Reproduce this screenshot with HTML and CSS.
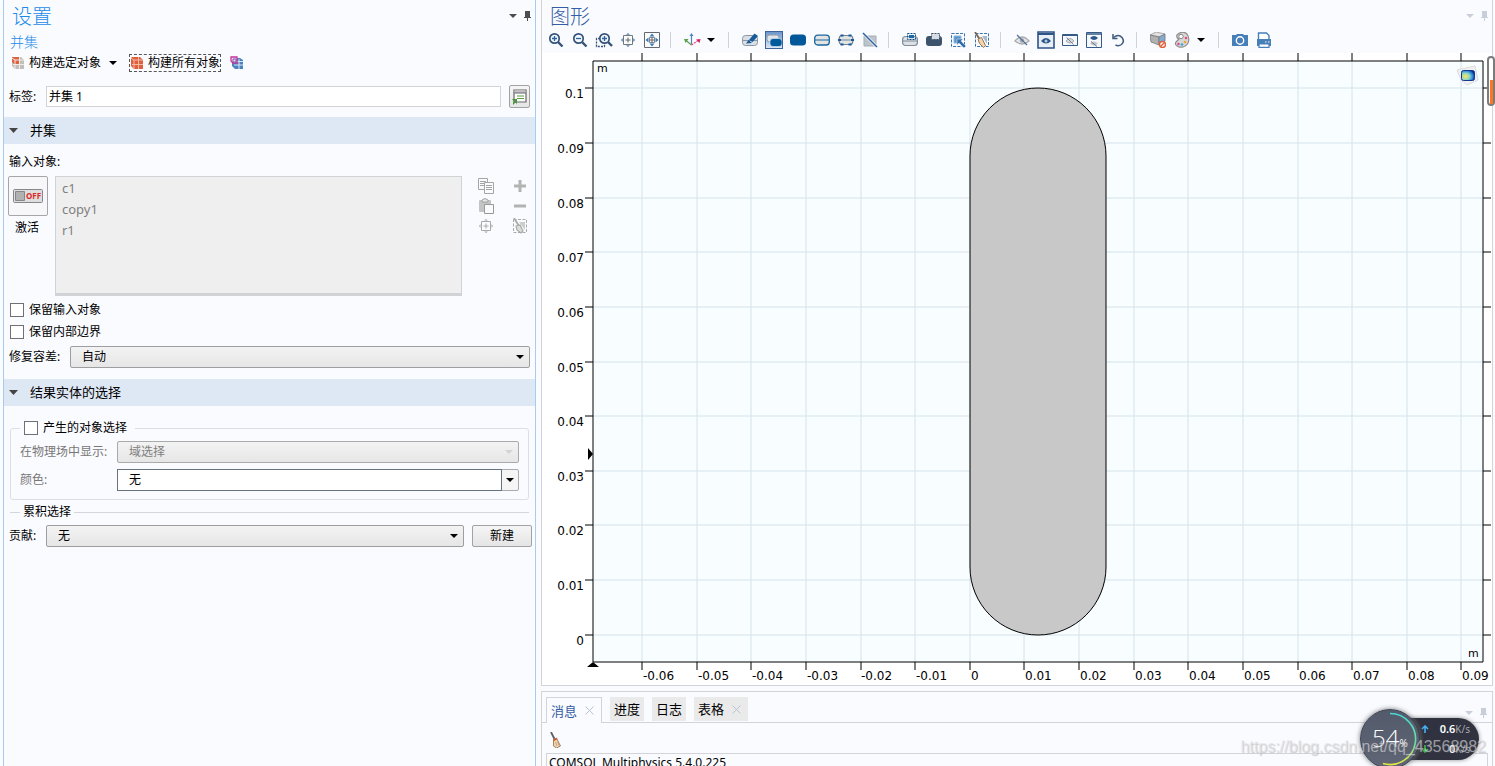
FILE: index.html
```html
<!DOCTYPE html>
<html lang="zh-CN">
<head>
<meta charset="utf-8">
<title>COMSOL Multiphysics</title>
<link rel="stylesheet" href="styles.css">
</head>
<body>
<svg class="defs" aria-hidden="true">
  <symbol id="pin" viewBox="0 0 8 10"><path d="M1 0h5v6H1z M0 6h7v1H0z M3 7h1v3H3z"/></symbol>
  <symbol id="caret" viewBox="0 0 8 4"><path d="M0 0h8L4 4z"/></symbol>
  <symbol id="cross" viewBox="0 0 9 9"><path d="M.5.5l8 8M8.500.5l-8 8" stroke="#b9c4d3" fill="none"/></symbol>
  <symbol id="center" viewBox="0 0 16 16"><path d="M3.500 3.500h9v9h-9z" fill="none" stroke="currentColor"/><path d="M8 5.500v5M5.500 8h5" stroke="currentColor" stroke-width="1.400"/><path d="M8 0l2 2H6zM8 16l2-2H6zM0 8l2-2v4zM16 8l-2-2v4z"/></symbol>
  <symbol id="broom" viewBox="0 0 16 16"><path d="M2 0l3.500 7" stroke="#5c5f63" stroke-width="1.800"/><path d="M4.500 7.500l3-1.500 4 8-4 2-3-2z" fill="#f3d6ae" stroke="#8c6b52" stroke-width=".8"/><path d="M4.500 8.500l3.500-1.800" stroke="#d6532e" stroke-width="1.500"/><path d="M6.500 10l1.500 4M8.500 9.500l1.500 4" stroke="#b58b62" stroke-width=".7"/></symbol>
</svg>

<main class="workspace">
  <section class="panel settings" aria-label="设置">
    <header class="panel-title">
      <h1>设置</h1>
      <span class="window-tools">
        <button type="button" aria-label="菜单"><svg width="8" height="4"><use href="#caret"/></svg></button>
        <button type="button" aria-label="固定"><svg width="8" height="10"><use href="#pin"/></svg></button>
      </span>
    </header>
    <h2 class="subtitle">并集</h2>
    <div class="build-bar">
      <button type="button" class="build">
        <svg width="14" height="14" viewBox="0 0 14 14"><path d="M1 1h9l3 3v9H4l-3-3z" fill="#bfc0bc"/><path d="M1 1h7v7H3L1 6z" fill="#dc6340"/><path d="M1 2l3 2h9M4 4v9M8.500 1v12M2 8.500h11" fill="none" stroke="#f6e9e4"/></svg>
        <span>构建选定对象</span><svg class="drop" width="8" height="4"><use href="#caret"/></svg>
      </button>
      <button type="button" class="build focused">
        <svg width="14" height="14" viewBox="0 0 14 14"><path d="M2 1h8l3 3v9H4l-3-3V2z" fill="#de613e"/><path d="M1 2l3 2h9M4 4v9M8.500 1v12M2 8.500h11" fill="none" stroke="#f5b9a6"/></svg>
        <span>构建所有对象</span>
      </button>
      <button type="button" class="build" aria-label="网格">
        <svg width="14" height="14" viewBox="0 0 14 14"><path d="M2 2h8l3 2v9H5l-3-3z" fill="#4a83bd"/><path d="M4 9h9M9 3v10M5 5.500h8" stroke="#d9e6f4"/><path d="M1 1h6v6H3L1 5z" fill="#f3e4f4" stroke="#c4329c" stroke-width="1.300"/><path d="M3 3h3v3H3z" fill="none" stroke="#7456a5"/></svg>
      </button>
    </div>
    <div class="label-row">
      <label for="name">标签:</label>
      <input id="name" type="text" value="并集 1">
      <button type="button" class="raised" aria-label="转到源">
        <svg width="17" height="17" viewBox="0 0 17 17"><path d="M3 2h12v12H3z" fill="#fff" stroke="#67676b" stroke-width="1.200"/><path d="M3.500 2.500h11v2.500h-11z" fill="#c4c1c5"/><path d="M3 5h12" stroke="#67676b"/><path d="M6 8h7M6 10.500h7" stroke="#56a03e" stroke-width="1.200"/><path d="M1 11h5v5l-1.500-1.500L2 17v-2.500l1-1z" fill="#4c9442"/></svg>
      </button>
    </div>

    <h3 class="section-head"><svg width="9" height="5" viewBox="0 0 9 5"><path d="M0 0h9L4.500 5z"/></svg>并集</h3>
    <div class="section">
      <p class="line" id="inputs-label">输入对象:</p>
      <div class="inputs">
        <div class="activate">
          <button type="button" id="activate" aria-label="激活">
            <svg width="30" height="14" viewBox="0 0 30 14"><rect x=".5" y=".5" width="29" height="13" rx="1" fill="#dededc" stroke="#85878a"/><path d="M2.500 2.500h9v9h-9z" fill="#b1b1b3" stroke="#85878a"/><text x="13" y="10" class="off">OFF</text></svg>
          </button>
          <label for="activate">激活</label>
        </div>
        <ul class="objects" aria-labelledby="inputs-label"><li>c1</li><li>copy1</li><li>r1</li></ul>
        <div class="object-tools">
          <button type="button" aria-label="复制"><svg width="16" height="16" viewBox="0 0 16 16" fill="#fafbff" stroke="#a5a5a5"><path d="M.5.500h9v11h-9z"/><path d="M2 3.500h6M2 5.500h4M2 7.500h4"/><path d="M6.500 4.500h9v11h-9z"/><path d="M8 7.500h6M8 9.500h6M8 11.500h6"/></svg></button>
          <button type="button" aria-label="添加"><svg width="16" height="16" viewBox="0 0 16 16"><path d="M8 2v12M2 8h12" stroke="#b3b3b3" stroke-width="3"/></svg></button>
          <button type="button" aria-label="粘贴"><svg width="16" height="16" viewBox="0 0 16 16"><rect x="1" y="2" width="12" height="12" rx="1" fill="#c4c4c4"/><path d="M4 4V2q3-3 6 0v2z" fill="#e8e8e8" stroke="#a0a0a0"/><path d="M6.500 6.500h9v9h-9z" fill="#fafbff" stroke="#999"/></svg></button>
          <button type="button" aria-label="移除"><svg width="16" height="16" viewBox="0 0 16 16"><path d="M2 8h12" stroke="#b3b3b3" stroke-width="3"/></svg></button>
          <button type="button" aria-label="缩放到选择"><svg class="pale" width="14" height="14" viewBox="0 0 14 14"><path d="M2.500 2.500h9v9h-9z" fill="none" stroke="currentColor"/><path d="M7 4.500v5M4.500 7h5" stroke="currentColor"/><path d="M7 0l2 1.500H5zM7 14l2-1.500H5zM0 7l1.500-2v4zM14 7l-1.500-2v4z"/></svg></button>
          <button type="button" aria-label="清除选择"><svg width="16" height="16" viewBox="0 0 16 16"><path d="M1.500 1.500h13v13h-13z" fill="none" stroke="#aaa" stroke-dasharray="3 1.500"/><path d="M7 4h6v8z" fill="#ccc"/><path d="M2 0l5 8" stroke="#aaa" stroke-width="1.800"/><path d="M4 8l4-1 3 6-2 2-4-3z" fill="#ddd" stroke="#aaa" stroke-width="1.200"/></svg></button>
        </div>
      </div>
      <label class="check"><input type="checkbox">保留输入对象</label>
      <label class="check"><input type="checkbox">保留内部边界</label>
      <div class="field">
        <label for="tolerance">修复容差:</label>
        <span class="select"><select id="tolerance"><option>自动</option></select></span>
      </div>
    </div>

    <h3 class="section-head"><svg width="9" height="5" viewBox="0 0 9 5"><path d="M0 0h9L4.500 5z"/></svg>结果实体的选择</h3>
    <div class="section results">
      <fieldset class="group">
        <legend><label class="check"><input type="checkbox">产生的对象选择</label></legend>
        <div class="group-grid">
          <label for="physics">在物理场中显示:</label>
          <span class="select disabled"><select id="physics" disabled><option>域选择</option></select></span>
          <label for="color">颜色:</label>
          <span class="select combo"><select id="color"><option>无</option></select></span>
        </div>
      </fieldset>
      <fieldset class="cumulative">
        <legend>累积选择</legend>
      </fieldset>
      <div class="field contribute">
        <label for="contribution">贡献:</label>
        <span class="select"><select id="contribution"><option>无</option></select></span>
        <button type="button" class="raised new">新建</button>
      </div>
    </div>
  </section>

  <div class="right">
    <section class="panel graphics" aria-label="图形">
      <header class="panel-title">
        <h1>图形</h1>
        <span class="window-tools muted">
          <button type="button" aria-label="菜单"><svg width="8" height="4"><use href="#caret"/></svg></button>
          <button type="button" aria-label="固定"><svg width="8" height="10"><use href="#pin"/></svg></button>
        </span>
      </header>
      <div class="toolbar" role="toolbar">
        <button type="button" aria-label="放大"><svg width="16" height="16" viewBox="0 0 16 16"><circle cx="6.500" cy="6.500" r="4.700" fill="#f4f7fb" stroke="#35527a" stroke-width="1.700"/><path d="M10 10l4.500 4.500" stroke="#35527a" stroke-width="2.400"/><path d="M4 6.500h5M6.500 4v5" stroke="#2b63a0" stroke-width="1.300"/></svg></button>
        <button type="button" aria-label="缩小"><svg width="16" height="16" viewBox="0 0 16 16"><circle cx="6.500" cy="6.500" r="4.700" fill="#f4f7fb" stroke="#35527a" stroke-width="1.700"/><path d="M10 10l4.500 4.500" stroke="#35527a" stroke-width="2.400"/><path d="M4 6.500h5" stroke="#2b63a0" stroke-width="1.300"/></svg></button>
        <button type="button" aria-label="框选缩放"><svg width="18" height="16" viewBox="0 0 18 16"><path d="M5 6.500H1.500v8h8V11" fill="none" stroke="#35527a" stroke-width="1.300" stroke-dasharray="2 1.200"/><circle cx="9.500" cy="6.500" r="4.700" fill="#f4f7fb" stroke="#35527a" stroke-width="1.700"/><path d="M13 10l4 4" stroke="#35527a" stroke-width="2.400"/><path d="M7 6.500h5M9.500 4v5" stroke="#2b63a0" stroke-width="1.300"/></svg></button>
        <button type="button" aria-label="缩放到选择"><svg width="14" height="14" viewBox="0 0 14 14"><path d="M2.500 2.500h9v9h-9z" fill="none" stroke="#777"/><path d="M7 4.500v5M4.500 7h5" stroke="#666"/><path d="M7 0l2 1.800H5zM7 14l2-1.800H5zM0 7l1.800-2v4zM14 7l-1.800-2v4z" fill="#4a83bd"/></svg></button>
        <button type="button" aria-label="缩放到窗口"><svg width="16" height="16" viewBox="0 0 16 16"><path d="M.5.500h15v15H.5z" fill="none" stroke="#66686c"/><path d="M5.500 5.500h5v5h-5z" fill="none" stroke="#888"/><path d="M8 5.500v5M5.500 8h5" stroke="#666"/><path d="M8 1.500l2.500 3h-5zM8 14.500l2.500-3h-5zM1.500 8l3-2.500v5zM14.500 8l-3-2.500v5z" fill="#3d79b9"/></svg></button>
        <i class="sep"></i>
        <button type="button" aria-label="转到视图"><svg width="18" height="16" viewBox="0 0 18 16"><path d="M8.500 3v9" stroke="#4c84bd" stroke-width="1.200"/><path d="M8.500 1l2 3h-4z" fill="#4c84bd"/><path d="M8.500 13L3 8.500" stroke="#5ba04c" stroke-width="1.200"/><path d="M1 7h4.500L2.500 11z" fill="#5ba04c"/><path d="M8.500 13l6-4" stroke="#e0447b" stroke-width="1.200" stroke-dasharray="2 1"/><path d="M17.500 7l-1 4-3.500-3.500z" fill="#d81e62"/></svg></button>
        <button type="button" class="narrow" aria-label="视图菜单"><svg width="8" height="4"><use href="#caret"/></svg></button>
        <i class="sep"></i>
        <button type="button" aria-label="选择"><svg width="16" height="16" viewBox="0 0 16 16"><rect x=".5" y="3.500" width="15" height="10" rx="3" fill="#d9dfe4" stroke="#8b97a4"/><path d="M0 8.500h16" stroke="#8b97a4"/><path d="M7 8l5.500-6.500L16 4l-5.500 6z" fill="#15599b"/><path d="M4 11.500l2.500-3.500 3.500 3z" fill="#15599b"/></svg></button>
        <button type="button" class="pressed" aria-pressed="true" aria-label="选择对象"><svg width="16" height="16" viewBox="0 0 16 16"><rect x="1" y="3" width="12" height="7" rx="2.500" fill="#dfe5eb" stroke="#8d98a5"/><rect x="4" y="6.500" width="12" height="8" rx="3" fill="#005a9c" stroke="#e5edf5" stroke-width=".6"/></svg></button>
        <button type="button" aria-label="选择域"><svg width="16" height="16" viewBox="0 0 16 16"><rect y="2.500" width="16" height="11" rx="3.500" fill="#00579a"/></svg></button>
        <button type="button" aria-label="选择边界"><svg width="16" height="16" viewBox="0 0 16 16"><rect x=".7" y="3.200" width="14.600" height="9.800" rx="3" fill="#e2e4e4" stroke="#1a659f" stroke-width="1.300"/><path d="M1 8h14" stroke="#1a659f"/></svg></button>
        <button type="button" aria-label="选择点"><svg width="16" height="16" viewBox="0 0 16 16"><rect x="1.200" y="3.500" width="13.600" height="9" rx="3" fill="#e2e4e4" stroke="#708395" stroke-width="1.200"/><path d="M1 8h14" stroke="#708395"/><path d="M2.500 2.500h3v2h-3zM10.500 2.500h3v2h-3zM0 7h3v2H0zM13 7h3v2h-3zM2.500 11.500h3v2h-3zM10.500 11.500h3v2h-3z" fill="#15599b"/></svg></button>
        <button type="button" aria-label="取消选择"><svg width="16" height="16" viewBox="0 0 16 16"><path d="M2 4h12v10H2z" fill="#bcc4cc" stroke="#a4adb6"/><path d="M1 1l14 14" stroke="#f5f7fa" stroke-width="3"/><path d="M1 1l14 14" stroke="#2d629d" stroke-width="1.500"/></svg></button>
        <i class="sep"></i>
        <button type="button" aria-label="框选"><svg width="16" height="16" viewBox="0 0 16 16"><rect x=".6" y="4.500" width="14.800" height="9" rx="3" fill="#dde1e5" stroke="#7f8c99" stroke-width="1.200"/><path d="M1 9h14" stroke="#7f8c99"/><path d="M7 3h5v3H7z" fill="#176aac"/><path d="M5.500 1.500h8v6h-8z" fill="none" stroke="#124f89" stroke-width="1" stroke-dasharray="2 1"/></svg></button>
        <button type="button" aria-label="框选域"><svg width="16" height="16" viewBox="0 0 16 16"><rect y="4" width="16" height="10" rx="3" fill="#3d536c"/><path d="M5.500 1.500h8v6h-8z" fill="#d5dce3" stroke="#3d536c" stroke-dasharray="2 1"/></svg></button>
        <button type="button" aria-label="选择框"><svg width="16" height="16" viewBox="0 0 16 16"><path d="M1.500 1.500h13v13h-13z" fill="none" stroke="#3973b0" stroke-dasharray="3 1.300"/><path d="M4 4h7v7H4z" fill="#5594d0" stroke="#91b7da"/><path d="M7 7h6l-2 2 5 5-2 2-5-5-2 2z" fill="#326da8" stroke="#dce8f5" stroke-width=".6"/></svg></button>
        <button type="button" aria-label="清除选择"><svg width="16" height="16" viewBox="0 0 16 16"><path d="M1.500 1.500h13v13h-13z" fill="none" stroke="#3973b0" stroke-dasharray="3 1.300"/><path d="M8 4h5v8z" fill="#a5bad0"/><path d="M1 0l4.500 7" stroke="#776353" stroke-width="1.800"/><path d="M4 7l3.500-1.500 4 8-2 2-4-4z" fill="#f2d6ae" stroke="#957456"/></svg></button>
        <i class="sep"></i>
        <button type="button" aria-label="隐藏"><svg width="16" height="16" viewBox="0 0 16 16"><path d="M1 9q7-8 14 0-7 6-14 0z" fill="#e5e6e7" stroke="#a9acaf" stroke-width="1.300"/><circle cx="8" cy="8.500" r="2.200" fill="#a5a9ad"/><path d="M3 3l10 10" stroke="#51719a" stroke-width="1.200"/></svg></button>
        <button type="button" aria-pressed="true" aria-label="显示"><svg width="18" height="18" viewBox="0 0 18 18"><path d="M1 1h16v16H1z" fill="#e8eef6" stroke="#2d5488" stroke-width="1.600"/><path d="M1 3h16" stroke="#2d5488" stroke-width="2"/><path d="M4 10q5-6 10 0-5 5-10 0z" fill="#27568b"/><circle cx="9" cy="10" r="1.500" fill="#b8c9db"/></svg></button>
        <button type="button" aria-label="隐藏实体"><svg width="16" height="16" viewBox="0 0 16 16"><path d="M.5 2.500h15v11H.5z" fill="#f5f7fa" stroke="#345a87"/><path d="M1 3.500h14" stroke="#345a87"/><path d="M4 9q4-5 8 0-4 4-8 0z" fill="#dadddf" stroke="#aaa"/><path d="M4.500 5.500l7 7" stroke="#7184a0"/></svg></button>
        <button type="button" aria-label="仅显示隐藏"><svg width="16" height="16" viewBox="0 0 16 16"><path d="M.5.500h15v15H.5z" fill="#f5f7fa" stroke="#345a87"/><path d="M1 2h14" stroke="#345a87" stroke-width="1.500"/><path d="M4 6q4-4 8 0-4 4-8 0z" fill="#27568b"/><path d="M4 11.500q4-4 8 0-4 4-8 0z" fill="#c3c7ca"/><path d="M5 9.500l6 5" stroke="#61778e"/></svg></button>
        <button type="button" aria-label="重置"><svg width="16" height="16" viewBox="0 0 16 16"><path d="M3.500 5.500q5-4 8.500 0 3 4-.5 7-3 2-6 .5" fill="none" stroke="#3e5a7f" stroke-width="1.500"/><path d="M3 2v4.500h4.500" fill="none" stroke="#3e5a7f" stroke-width="1.500"/></svg></button>
        <i class="sep"></i>
        <button type="button" aria-label="透明"><svg width="16" height="16" viewBox="0 0 16 16"><path d="M0 3l6-3 9 2-5 3z" fill="#e2e2e2" stroke="#999" stroke-width=".8"/><path d="M0 3l9 2v8l-8-3z" fill="#b1b1b1" stroke="#777" stroke-width=".8"/><path d="M9 5l6-3v7l-6 4z" fill="#83aad1" stroke="#777" stroke-width=".8"/><circle cx="12.500" cy="12.500" r="3" fill="#fff" stroke="#e05e3a" stroke-width="1.400"/><path d="M10.500 14.500l4-4" stroke="#e05e3a" stroke-width="1.300"/></svg></button>
        <button type="button" aria-label="颜色"><svg width="16" height="16" viewBox="0 0 16 16"><path d="M3 3q5-5 10-1 3 4 1 9-3 5-9 4-5-2-3-5l3-3q-3-1-2-4z" fill="#d8d7d5" stroke="#8d8d8d" stroke-width="1.200"/><circle cx="7" cy="4.500" r="2.200" fill="#fff" stroke="#888"/><circle cx="12" cy="6" r="1.300" fill="#e84a80"/><circle cx="11" cy="10" r="1.300" fill="#f1a13a"/><circle cx="8" cy="12.500" r="1.300" fill="#37a6d5"/><circle cx="4.500" cy="12" r="1.300" fill="#e04e91"/></svg></button>
        <button type="button" class="narrow" aria-label="颜色菜单"><svg width="8" height="4"><use href="#caret"/></svg></button>
        <i class="sep"></i>
        <button type="button" aria-label="快照"><svg width="16" height="16" viewBox="0 0 16 16"><path d="M0 3h4l1-1h6l1 1h4v11H0z" fill="#477fb8"/><circle cx="8" cy="8.500" r="3.700" fill="#477fb8" stroke="#fff" stroke-width="1.400"/></svg></button>
        <button type="button" aria-label="打印"><svg width="16" height="16" viewBox="0 0 16 16"><path d="M2.500 7V1h8l2.500 2.500V7" fill="#fff" stroke="#477fb8" stroke-width="1.400"/><path d="M1 7h14v7H1z" fill="#477fb8"/><path d="M3 12h10v3.300H3z" fill="#fff" stroke="#477fb8" stroke-width="1.200"/><path d="M9 10h1.500M12 10h1.500" stroke="#fff"/></svg></button>
      </div>
      <svg class="plot" viewBox="542 53 950 632" role="img" aria-label="几何图形">
        <defs>
          <radialGradient id="logo" cx=".3" cy=".6" r=".75"><stop offset="0" stop-color="#fde95a"/><stop offset=".45" stop-color="#8fd6c4"/><stop offset=".75" stop-color="#2a86d8"/><stop offset="1" stop-color="#06258c"/></radialGradient>
        </defs>
        <path d="M593 61h890v601H593z" fill="#f8fdff"/>
        <path class="grid" d="M642 61v601M697 61v601M751 61v601M806 61v601M861 61v601M915 61v601M970 61v601M1024 61v601M1079 61v601M1134 61v601M1188 61v601M1243 61v601M1298 61v601M1352 61v601M1407 61v601M1461 61v601M593 88h890M593 143h890M593 198h890M593 252h890M593 307h890M593 362h890M593 416h890M593 471h890M593 525h890M593 580h890M593 635h890"/>
        <path class="axis" d="M593 61h890v601H593zM642 53v8m0 601v8M697 53v8m0 601v8M751 53v8m0 601v8M806 53v8m0 601v8M861 53v8m0 601v8M915 53v8m0 601v8M970 53v8m0 601v8M1024 53v8m0 601v8M1079 53v8m0 601v8M1134 53v8m0 601v8M1188 53v8m0 601v8M1243 53v8m0 601v8M1298 53v8m0 601v8M1352 53v8m0 601v8M1407 53v8m0 601v8M1461 53v8m0 601v8M585 88h8m890 0h8M585 143h8m890 0h8M585 198h8m890 0h8M585 252h8m890 0h8M585 307h8m890 0h8M585 362h8m890 0h8M585 416h8m890 0h8M585 471h8m890 0h8M585 525h8m890 0h8M585 580h8m890 0h8M585 635h8m890 0h8"/>
        <rect class="shape" x="970" y="88" width="136" height="547" rx="68"/>
        <path d="M588 448l5 6-5 6zM587 667l6-5 6 5z"/>
        <g class="ticks">
          <text x="643" y="680">-0.06</text><text x="698" y="680">-0.05</text><text x="752" y="680">-0.04</text><text x="807" y="680">-0.03</text><text x="861" y="680">-0.02</text><text x="916" y="680">-0.01</text><text x="971" y="680">0</text><text x="1025" y="680">0.01</text><text x="1080" y="680">0.02</text><text x="1135" y="680">0.03</text><text x="1189" y="680">0.04</text><text x="1244" y="680">0.05</text><text x="1299" y="680">0.06</text><text x="1353" y="680">0.07</text><text x="1408" y="680">0.08</text><text x="1462" y="680">0.09</text>
          <text class="unit" x="597" y="72">m</text><text class="unit" x="1468" y="657">m</text>
        </g>
        <g class="ticks end">
          <text x="584" y="98">0.1</text><text x="584" y="153">0.09</text><text x="584" y="208">0.08</text><text x="584" y="262">0.07</text><text x="584" y="317">0.06</text><text x="584" y="372">0.05</text><text x="584" y="426">0.04</text><text x="584" y="481">0.03</text><text x="584" y="535">0.02</text><text x="584" y="590">0.01</text><text x="584" y="645">0</text>
        </g>
        <path d="M1457 70l18-4 3 14-11 5-6-5z" fill="#f1f1f1" stroke="#dcdcdc"/>
        <rect x="1461.500" y="70.500" width="13" height="10" rx="2" fill="url(#logo)" stroke="#16398f"/>
      </svg>
    </section>

    <section class="panel messages" aria-label="消息">
      <div class="tabs" role="tablist">
        <button type="button" role="tab" aria-selected="true" class="tab active">消息<svg width="9" height="9"><use href="#cross"/></svg></button>
        <button type="button" role="tab" class="tab">进度</button>
        <button type="button" role="tab" class="tab">日志</button>
        <button type="button" role="tab" class="tab">表格<svg width="9" height="9"><use href="#cross"/></svg></button>
        <span class="window-tools muted">
          <button type="button" aria-label="菜单"><svg width="8" height="4"><use href="#caret"/></svg></button>
          <button type="button" aria-label="固定"><svg width="8" height="10"><use href="#pin"/></svg></button>
        </span>
      </div>
      <button type="button" class="clear" aria-label="清除"><svg width="16" height="16"><use href="#broom"/></svg></button>
      <div class="log">COMSOL Multiphysics 5.4.0.225</div>
    </section>
  </div>
</main>

<div class="scroll-mark"><i></i></div>
<aside class="meter" aria-label="网速">
  <div class="rates">
    <p><svg width="8" height="8" viewBox="0 0 8 8"><path d="M4 8V2M1 4l3-3 3 3" stroke="#45b0f3" stroke-width="1.600" fill="none"/></svg><b>0.6</b><small>K/s</small></p>
    <p><svg width="8" height="8" viewBox="0 0 8 8"><path d="M4 0v6M1 4l3 3 3-3" stroke="#3ac04b" stroke-width="1.600" fill="none"/></svg><b>0</b><small>K/s</small></p>
  </div>
  <div class="dial">
    <svg width="60" height="60" viewBox="0 0 60 60"><defs><linearGradient id="arc" x2="0" y2="1"><stop offset="0" stop-color="#46d9d4"/><stop offset=".6" stop-color="#70df9a"/><stop offset="1" stop-color="#e6e640"/></linearGradient></defs><path d="M30 4.500a25.500 25.500 0 1 1-7 50" fill="none" stroke="url(#arc)" stroke-width="1.600"/></svg>
    <span>54<small>%</small></span>
  </div>
</aside>
<p class="credit">https://blog.csdn.net/qq_43568982</p>
</body>
</html>
```
FILE: styles.css
```css
* { box-sizing: border-box; }
body {
  margin: 0;
  height: 100vh;
  overflow: hidden;
  position: relative;
  background: #fafbff;
  color: #000;
  font: 12px/18px "Noto Sans", "Noto Sans CJK SC", sans-serif;
}
h1, h2, h3, p, ul, fieldset { margin: 0; padding: 0; font-weight: 400; }
button, input, select { font: inherit; color: inherit; margin: 0; }
button { display: flex; align-items: center; justify-content: center; padding: 0; border: 0; background: none; flex: none; }
svg { flex: none; display: block; }
.defs { position: absolute; width: 0; height: 0; }

.workspace {
  display: grid;
  grid-template-columns: minmax(0, 533fr) minmax(0, 952fr);
  gap: 5px;
  height: 100%;
  padding: 0 2px 0 3px;
}
.right { display: flex; flex-direction: column; gap: 5px; min-height: 0; }
.settings { border: solid #a6cdf0; border-width: 0 1px; }
.graphics { border: 1px solid #d3d4da; border-top: 0; }

.panel-title { display: flex; justify-content: space-between; height: 30px; padding: 2px 3px 0 8px; }
.panel-title h1 { font-size: 20px; line-height: 28px; font-weight: 300; color: #1c8be8; font-family: "Noto Sans CJK SC", sans-serif; }
.graphics h1 { color: #345da6; }
.window-tools { display: flex; align-items: center; gap: 7px; fill: #4c4d52; }
.window-tools.muted { fill: #c9cfda; }

.subtitle { margin: 2px 0 0 6px; font-size: 14px; line-height: 20px; font-weight: 300; color: #1c8be8; }
.build-bar { display: flex; align-items: center; height: 22px; padding-left: 6px; gap: 8px; }
.build { height: 18px; gap: 4px; padding: 0 1px; }
.build .drop { margin: 0 3px 0 4px; }
.build.focused { outline: 1px dashed #555; outline-offset: -1px; }

.label-row { display: flex; align-items: center; margin-top: 11px; padding: 0 5px; height: 23px; }
.label-row label { width: 37px; }
.label-row input { flex: 1; min-width: 0; height: 21px; margin-right: 8px; padding: 0 2px 2px; border: 1px solid #d2d3d6; background: #fff; }
.raised { border: 1px solid #a2a2a5; border-radius: 2px; background: linear-gradient(#f5f5f6, #e5e5e6); }
.label-row .raised { width: 21px; height: 23px; }

.section-head { display: flex; align-items: center; gap: 12px; height: 27px; margin-top: 9px; padding: 0 0 1px 5px; font-size: 13px; background: #dee8f4; fill: #444; }
.section + .section-head { margin-top: 11px; }
.section { padding: 9px 5px 0 5px; }
.inputs { display: flex; margin-top: 5px; padding-right: 2px; }
.activate { width: 50px; margin-left: -1px; flex: none; }
.activate button { width: 40px; height: 40px; border: 1px solid #a6a6aa; border-radius: 2px; background: #f7f7fa; }
.activate label { display: block; width: 38px; margin-top: 3px; text-align: center; }
.off { font: 700 8px "Noto Sans", sans-serif; fill: #dd2929; }
.objects { flex: 1; height: 120px; padding: 1px 6px; margin-left: -3px; list-style: none; font-size: 13px; line-height: 21px; color: #808080; background: #efefef; border: 1px solid #d1d2d5; border-bottom-width: 3px; }
.object-tools { display: grid; grid-template-columns: 16px 16px; column-gap: 18px; grid-auto-rows: 20px; align-content: start; margin-left: 16px; }
.pale { color: #aaa; fill: #aaa; }
.check { display: flex; align-items: center; gap: 5px; height: 22px; padding-left: 1px; }
.inputs + .check { margin-top: 3px; }
.check input { appearance: none; width: 14px; height: 14px; border: 1px solid #6f7073; background: #fff; }

.field { display: flex; align-items: center; height: 22px; margin-top: 3px; }
.field label { width: 61px; flex: none; }
.select { position: relative; display: flex; flex: 1; min-width: 0; }
.select select { appearance: none; width: 100%; height: 22px; padding: 0 11px; border: 1px solid #9d9ea1; border-radius: 2px; background: linear-gradient(#f3f3f3, #e6e6e7); }
.select::after { content: ""; position: absolute; right: 6px; top: 9px; border: solid transparent; border-width: 4px 4px 0; border-top-color: #000; pointer-events: none; }
.select.disabled select { color: #808080; opacity: 1; border-color: #aaa; }
.select.disabled::after { border-top-color: #d2d3d5; }
.select.combo { border: 1px solid #a9abaf; border-radius: 2px; padding-right: 16px; background: #f5f5f6; }
.select.combo select { height: 22px; margin: -1px 0 -1px -1px; border-color: #66737f; border-radius: 0; background: #fff; width: calc(100% + 1px); }
.select.combo::after { right: 4px; top: 8px; }

.results { padding: 12px 3px 0 5px; }
.group { margin: 0 3px 0 1px; padding: 3px 9px 8px; min-width: 0; border: 1px solid #dadfe6; border-radius: 3px; }
.group legend { padding: 0 8px 0 3px; }
.group .check { height: 20px; }
.group-grid { display: grid; grid-template-columns: 97px minmax(0, 1fr); row-gap: 6px; align-items: center; color: #777; }
.group-grid .combo { color: #000; }
.cumulative { margin: 3px 3px 0 1px; padding: 0; border: 0 solid #d3d7dd; border-top-width: 1px; min-width: 0; }
.cumulative legend { margin-left: 10px; padding: 0 3px; }
.field.contribute { margin-top: 4px; }
.field.contribute label { width: 37px; }
.new { width: 60px; height: 22px; margin-left: 8px; }

.toolbar { display: flex; align-items: center; height: 23px; padding: 0 0 3px 2px; overflow: hidden; }
.toolbar button { width: 24px; height: 20px; }
.toolbar .narrow { width: 18px; justify-content: flex-start; padding-left: 3px; }
.toolbar .pressed svg { width: 18px; height: 18px; background: linear-gradient(#6d96cb, #dbe8f6); border: 1px solid #3d659b; }
.sep { flex: none; width: 1px; height: 16px; margin: 0 9px 0 6px; background: #d0d2d7; }
.plot { width: 100%; background: #fff; }
.grid { fill: none; stroke: #d4e3ea; }
.axis { fill: none; stroke: #000; }
.shape { fill: #c8c8c8; stroke: #000; }
.ticks { font: 12px "DejaVu Sans", sans-serif; }
.unit { font-size: 11px; }
.end { text-anchor: end; }

.messages { flex: 1; min-height: 0; overflow: hidden; border: 1px solid #d3d4da; border-bottom: 0; }
.tabs { display: flex; align-items: flex-start; gap: 8px; height: 31px; padding: 5px 4px 0 4px; border-bottom: 1px solid #d3d4da; }
.tab { height: 24px; padding: 0 4px; gap: 8px; font-size: 13px; background: #eaeaea; }
.tab:nth-child(4) { padding-right: 7px; }
.tab.active { height: 26px; padding: 0 7px 0 4px; color: #345da6; background: #fafbff; border: 1px solid #d3d4da; border-bottom: 0; }
.tabs .window-tools { margin-left: auto; height: 32px; }
.clear { margin: 9px 0 0 7px; }
.log { height: 60px; margin: 5px 4px 0 4px; padding: 0 2px; border: 1px solid #d3d4da; font-size: 12px; }

.scroll-mark { position: absolute; right: 0; top: 56px; width: 8px; height: 50px; border: 2px solid #7c7c7c; border-radius: 4px; background: #fff; display: flex; align-items: flex-end; justify-content: center; }
.scroll-mark i { width: 3px; height: 24px; background: #ff7521; }
.meter { position: absolute; right: 16px; bottom: -3px; width: 119px; height: 60px; display: flex; align-items: center; color: #fff; }
.rates { width: 80px; height: 42px; margin-left: auto; padding: 1px 9px 0 22px; border-radius: 0 21px 21px 0; background: #30333f; box-shadow: 0 0 4px #888; }
.rates p { display: flex; align-items: center; height: 20px; }
.rates b { margin-left: auto; font-size: 11px; font-weight: 600; }
.rates small { font-size: 10px; color: #a5a8b0; }
.dial { position: absolute; left: 0; top: 0; width: 60px; height: 60px; border-radius: 50%; background: linear-gradient(#535a6b, #606675); border: 1px solid #3e4352; box-shadow: 0 0 5px #777; }
.dial svg { position: absolute; left: -1px; top: -1px; }
.dial span { position: absolute; left: 11px; top: 10px; font: 300 24px/36px "Open Sans", sans-serif; white-space: nowrap; }
.dial small { font-size: 10px; font-weight: 400; }
.credit { position: absolute; right: 9px; bottom: 9px; font: 16px/20px "Liberation Sans", sans-serif; color: rgba(225, 225, 230, .6); text-shadow: 1px 1px 1px rgba(90, 90, 90, .3); pointer-events: none; }
```
